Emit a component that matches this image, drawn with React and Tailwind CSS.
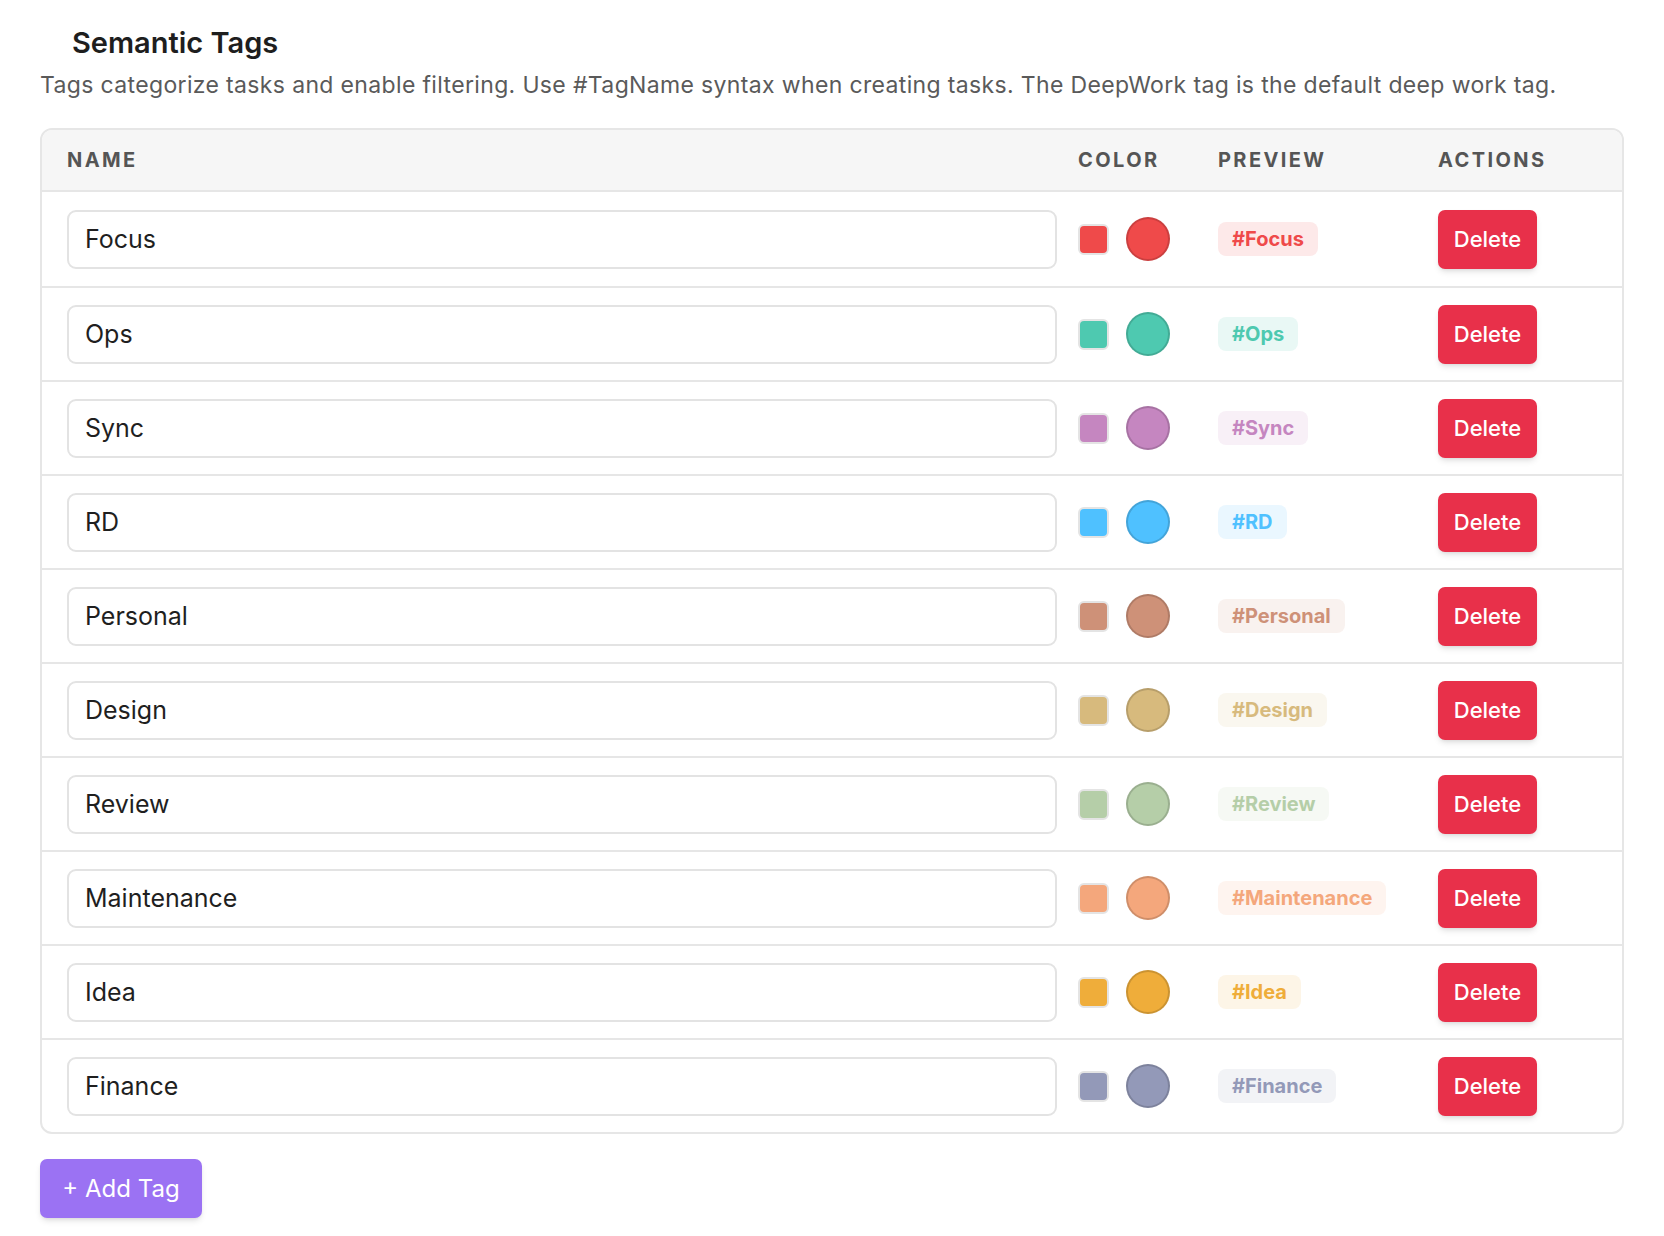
const tags = [
  { name: 'Focus', sq: 'bg-[#ef4a4a]', dot: 'bg-[#ef4a4a]', badge: 'bg-[#ef4a4a1f] text-[#ef4a4a]' },
  { name: 'Ops', sq: 'bg-[#4ec9b0]', dot: 'bg-[#4ec9b0]', badge: 'bg-[#4ec9b01f] text-[#4ec9b0]' },
  { name: 'Sync', sq: 'bg-[#c586c0]', dot: 'bg-[#c586c0]', badge: 'bg-[#c586c01f] text-[#c586c0]' },
  { name: 'RD', sq: 'bg-[#4fc1ff]', dot: 'bg-[#4fc1ff]', badge: 'bg-[#4fc1ff1f] text-[#4fc1ff]' },
  { name: 'Personal', sq: 'bg-[#ce9178]', dot: 'bg-[#ce9178]', badge: 'bg-[#ce91781f] text-[#ce9178]' },
  { name: 'Design', sq: 'bg-[#d7ba7d]', dot: 'bg-[#d7ba7d]', badge: 'bg-[#d7ba7d1f] text-[#d7ba7d]' },
  { name: 'Review', sq: 'bg-[#b5cea8]', dot: 'bg-[#b5cea8]', badge: 'bg-[#b5cea81f] text-[#b5cea8]' },
  { name: 'Maintenance', sq: 'bg-[#f4a77c]', dot: 'bg-[#f4a77c]', badge: 'bg-[#f4a77c1f] text-[#f4a77c]' },
  { name: 'Idea', sq: 'bg-[#efad3a]', dot: 'bg-[#efad3a]', badge: 'bg-[#efad3a1f] text-[#efad3a]' },
  { name: 'Finance', sq: 'bg-[#9399b8]', dot: 'bg-[#9399b8]', badge: 'bg-[#9399b81f] text-[#9399b8]' },
];

function TagRow({ tag, first }) {
  return (
    <div className={`grid grid-cols-[1036px_140px_220px_1fr] h-[94px] items-center ${first ? '' : 'border-t-2 border-[#e6e6e6]'}`}>
      <div className="pl-[25px] pr-[21px]">
        <input
          defaultValue={tag.name}
          className="w-full h-[59px] rounded-[9px] border-2 border-[#e3e3e3] px-[16px] text-[25px] text-[#1f1f1f] outline-none"
        />
      </div>
      <div className="flex items-center gap-[17px]">
        <span className={`w-[31px] h-[31px] rounded-[6px] border-2 border-[#e4e4e4] ${tag.sq}`} />
        <span className={`w-[44px] h-[44px] rounded-full border-2 border-black/15 ${tag.dot}`} />
      </div>
      <div>
        <span className={`inline-flex items-center h-[34px] px-[14px] rounded-[8px] text-[20px] font-bold ${tag.badge}`}>
          #{tag.name}
        </span>
      </div>
      <div>
        <button className="w-[99px] h-[59px] rounded-[7px] bg-[#e8304a] text-white text-[22px] font-medium shadow-md">
          Delete
        </button>
      </div>
    </div>
  );
}

export default function App() {
  return (
    <div className="min-h-screen bg-white px-[40px] pt-[26px] pb-[20px] font-['Inter',sans-serif]">
      <h2 className="ml-[32px] text-[29px] leading-[34px] font-semibold text-[#1e1e1e]">Semantic Tags</h2>
      <p className="mt-[8px] text-[23px] leading-[34px] tracking-[0.35px] text-[#5a5a5a]">
        Tags categorize tasks and enable filtering. Use #TagName syntax when creating tasks. The DeepWork tag is the default deep work tag.
      </p>

      <div className="mt-[26px] rounded-[12px] border-2 border-[#e6e6e6] overflow-hidden">
        <div className="grid grid-cols-[1036px_140px_220px_1fr] h-[62px] items-center bg-[#f6f6f6] border-b-2 border-[#e6e6e6] text-[20px] font-bold tracking-[0.12em] text-[#555555]">
          <div className="pl-[25px]">NAME</div>
          <div>COLOR</div>
          <div>PREVIEW</div>
          <div>ACTIONS</div>
        </div>
        {tags.map((tag, i) => (
          <TagRow key={tag.name} tag={tag} first={i === 0} />
        ))}
      </div>

      <button className="mt-[25px] w-[162px] h-[59px] rounded-[7px] bg-[#9b72f3] text-white text-[24px] shadow-md">
        + Add Tag
      </button>
    </div>
  );
}
